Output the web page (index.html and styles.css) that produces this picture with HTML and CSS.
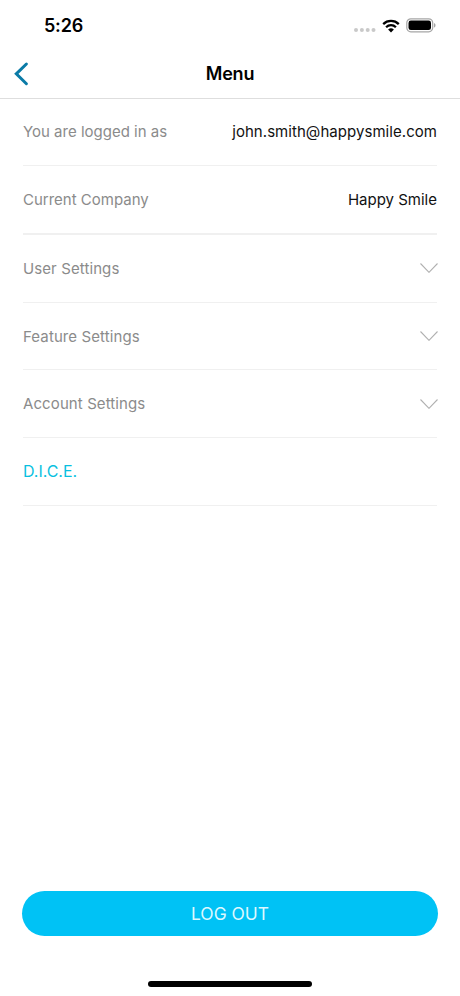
FILE: index.html
```html
<!DOCTYPE html>
<html lang="en">
<head>
    <meta charset="UTF-8">
    <meta name="viewport" content="width=device-width, initial-scale=1.0">
    <title>Menu</title>
    <link rel="stylesheet" href="styles.css">
</head>
<body>
    <div class="screen">
        <div class="status-bar">
            <span class="time">5:26</span>
            <div class="status-icons">
                <svg class="signal" width="22" height="4" viewBox="0 0 22 4">
                    <circle cx="2" cy="2" r="2"/>
                    <circle cx="7.9" cy="2" r="2"/>
                    <circle cx="13.7" cy="2" r="2"/>
                    <circle cx="19.5" cy="2" r="2"/>
                </svg>
                <svg class="wifi" width="18" height="14" viewBox="0 0 18 14">
                    <path d="M1.2 5.1a11.2 11.2 0 0 1 15.6 0M4.1 8.2a7 7 0 0 1 9.8 0" fill="none" stroke="#000" stroke-width="2.3"/>
                    <path d="M9 13.4L6.1 10.6a4.2 4.2 0 0 1 5.8 0z"/>
                </svg>
                <svg class="battery" width="30" height="15" viewBox="0 0 30 15">
                    <rect x="0.8" y="0.8" width="25.9" height="13" rx="4" fill="none" stroke="#a6a6a6" stroke-width="1.2"/>
                    <rect x="2.5" y="2.5" width="22.5" height="9.6" rx="2.4"/>
                    <path d="M28 5v4.6c1-.4 1.5-1.3 1.5-2.3S29 5.4 28 5z" fill="#a6a6a6"/>
                </svg>
            </div>
        </div>

        <header class="header">
            <a class="back" href="#" aria-label="Back">
                <svg width="16" height="26" viewBox="0 0 16 26">
                    <path d="M12.4 3L2.3 12.8l10.100 9.900" fill="none" stroke="#0a7ba7" stroke-width="3" stroke-linecap="round"/>
                </svg>
            </a>
            <h1>Menu</h1>
        </header>

        <main class="menu">
            <div class="row">
                <span class="label">You are logged in as</span>
                <span class="value email">john.smith@happysmile.com</span>
            </div>
            <div class="row row-last">
                <span class="label">Current Company</span>
                <span class="value">Happy Smile</span>
            </div>
            <div class="row">
                <span class="label setting">User Settings</span>
                <svg class="chevron" width="18" height="10" viewBox="0 0 18 10"><path d="M.5.5L9 9.3 17.5.5"/></svg>
            </div>
            <div class="row">
                <span class="label setting">Feature Settings</span>
                <svg class="chevron" width="18" height="10" viewBox="0 0 18 10"><path d="M.5.5L9 9.3 17.5.5"/></svg>
            </div>
            <div class="row">
                <span class="label setting">Account Settings</span>
                <svg class="chevron" width="18" height="10" viewBox="0 0 18 10"><path d="M.5.5L9 9.3 17.5.5"/></svg>
            </div>
            <div class="row">
                <a class="link" href="#">D.I.C.E.</a>
            </div>
        </main>

        <footer class="footer">
            <button class="logout">LOG OUT</button>
            <div class="home-indicator"></div>
        </footer>
    </div>
</body>
</html>
```
FILE: styles.css
```css
* {
    box-sizing: border-box;
}
body {
    margin: 0;
    background-color: #fff;
    color: #111;
    font-family: Inter, "Liberation Sans", sans-serif;
}
.screen {
    display: flex;
    flex-direction: column;
    height: 996px;
}
/* Status bar */
.status-bar {
    display: flex;
    justify-content: space-between;
    align-items: center;
    height: 50px;
    padding: 1px 24px 0 44px;
}
.time {
    font-size: 18px;
    font-weight: 600;
    letter-spacing: -0.2px;
    color: #000;
}
.status-icons {
    display: flex;
    align-items: center;
}
.signal {
    margin: 8px 6px 0 0;
    fill: #c9c9c9;
}
.wifi {
    margin-right: 6px;
}
/* Header */
.header {
    display: grid;
    grid-template-columns: 60px 1fr 60px;
    align-items: center;
    height: 49px;
    border-bottom: 1px solid #dedede;
}
.header h1 {
    margin: 0;
    padding-bottom: 2px;
    font-size: 18px;
    font-weight: 600;
    text-align: center;
    letter-spacing: -0.2px;
    color: #000;
}
.back {
    display: flex;
    padding-left: 14px;
}
/* Menu rows */
.menu {
    flex: 1;
    padding: 0 23px;
}
.row {
    display: flex;
    justify-content: space-between;
    align-items: center;
    height: 67.7px;
    border-bottom: 1px solid #f0f0f0;
    font-size: 15px;
}
.row:first-child {
    height: 67px;
    padding-bottom: 2px;
}
.row-last {
    height: 69px;
    border-bottom: 2px solid #f0f0f0;
}
.label {
    color: #8b8b8b;
}
.setting {
    letter-spacing: 0.1px;
}
.email {
    letter-spacing: 0.05px;
}
.link {
    color: #08bfe0;
    font-size: 16px;
    text-decoration: none;
}
.chevron {
    margin-right: -1px;
}
.chevron path {
    fill: none;
    stroke: #b0b0b0;
    stroke-width: 1.1;
}
/* Bottom */
.footer {
    display: flex;
    flex-direction: column;
    align-items: center;
    padding: 0 22px 9px;
}
.logout {
    width: 100%;
    height: 45px;
    margin-bottom: 45px;
    border: none;
    border-radius: 23px;
    background-color: #00c2f5;
    color: #dcf8ff;
    font-family: inherit;
    font-size: 17.4px;
    cursor: pointer;
}
.home-indicator {
    width: 164px;
    height: 6px;
    border-radius: 3px;
    background-color: #000;
}
```
